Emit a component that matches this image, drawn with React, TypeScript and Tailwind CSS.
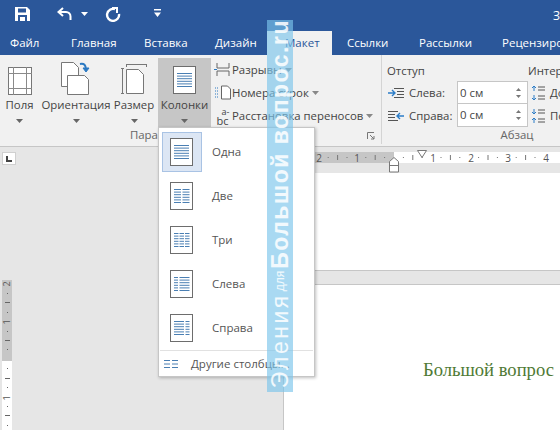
import { ReactNode } from "react"

const font = "font-['Open_Sans','Noto_Sans',sans-serif]"

function Caret({ className = "fill-[#666]" }: { className?: string }) {
  return (
    <svg width="7" height="4" viewBox="0 0 7 4" className={className}>
      <path d="M0 0h7L3.5 4z" />
    </svg>
  )
}

function PageIcon({ variant }: { variant: string }) {
  const rows = [0, 1, 2, 3, 4, 5]
  return (
    <svg width="24" height="29" viewBox="0 0 24 29" fill="none">
      <rect x="0.5" y="0.5" width="22" height="27" fill="#fff" stroke="#6d6d6d" />
      {rows.map((r) => {
        const y = 7.5 + r * 2.6
        if (variant === "one") return <path key={r} d={`M4 ${y}h15`} stroke="#4a7fb3" />
        if (variant === "two") return <path key={r} d={`M4 ${y}h7M12.5 ${y}h7`} stroke="#4a7fb3" />
        if (variant === "three") return <path key={r} d={`M4 ${y}h4.5M9.5 ${y}h4.5M15 ${y}h4.5`} stroke="#4a7fb3" />
        if (variant === "left") return <path key={r} d={`M4 ${y}h4M9.5 ${y}h10`} stroke="#4a7fb3" />
        return <path key={r} d={`M4 ${y}h10M15.5 ${y}h4`} stroke="#4a7fb3" />
      })}
    </svg>
  )
}

function TitleBar() {
  return (
    <div className="h-[31px] bg-[#2b579a] flex items-center text-white">
      <svg width="15" height="14" viewBox="0 0 15 14" className="ml-[15px] -mt-[3px]">
        <path d="M0 0h12l3 3v11H0z" fill="#fff" />
        <rect x="3" y="1.5" width="8" height="4" fill="#2b579a" />
        <rect x="3" y="8" width="9" height="6" fill="#2b579a" />
        <rect x="5" y="10" width="5" height="4" fill="#fff" />
      </svg>
      <svg width="16" height="14" viewBox="0 0 16 14" fill="none" stroke="#fff" strokeWidth="2" className="ml-[27px] -mt-[3px]">
        <path d="M6 1L1.5 5 6 9" />
        <path d="M2 5h7a4.5 4.5 0 0 1 4.5 4.5V13" />
      </svg>
      <Caret className="fill-white ml-[8px] -mt-[3px]" />
      <svg width="16" height="15" viewBox="0 0 16 15" fill="none" stroke="#fff" strokeWidth="2.4" className="ml-[17px] -mt-[3px]">
        <path d="M10 2.2a6 6 0 1 0 4 4.8" />
        <path d="M7 1h5v5" strokeWidth="2" />
      </svg>
      <svg width="7" height="8" viewBox="0 0 7 8" className="ml-[33px] -mt-[5px] fill-white">
        <path d="M0 0h7v1.4H0zM0 3.6h7L3.5 8z" />
      </svg>
      <span className={`ml-auto text-[12px] ${font}`}>З</span>
    </div>
  )
}

function Tabs() {
  const tabs = [
    { label: "Файл", w: "w-[46px] pl-[10px]" },
    { label: "Главная", w: "w-[73px] pl-[25px]" },
    { label: "Вставка", w: "w-[71px] pl-[25px]" },
    { label: "Дизайн", w: "w-[77px] pl-[25px]" },
  ]
  return (
    <div className={`h-[24px] bg-[#2b579a] flex text-[11.5px] text-white ${font}`}>
      {tabs.map((t) => (
        <div key={t.label} className={`${t.w} leading-[24px] shrink-0`}>{t.label}</div>
      ))}
      <div className="w-[65px] pl-[18px] leading-[24px] bg-[#f1f1f1] text-[#2b579a] shrink-0">Макет</div>
      <div className="w-[72px] pl-[15px] leading-[24px] shrink-0">Ссылки</div>
      <div className="w-[83px] pl-[15px] leading-[24px] shrink-0">Рассылки</div>
      <div className="pl-[15px] leading-[24px] whitespace-nowrap">Рецензирование</div>
    </div>
  )
}

function BigButton({ label, icon, className = "" }: { label: string; icon: ReactNode; className?: string }) {
  return (
    <div className={`h-[69px] flex flex-col items-center shrink-0 ${className}`}>
      <div className="h-[37px] flex items-end">{icon}</div>
      <div className="mt-[2px] leading-[16px] whitespace-nowrap">{label}</div>
      <div className="mt-[6px]"><Caret /></div>
    </div>
  )
}

function SmallRow({ icon, label }: { icon: ReactNode; label: string }) {
  return (
    <div className="h-[23px] flex items-center whitespace-nowrap">
      <div className="w-[19px] flex justify-center shrink-0">{icon}</div>
      <span>{label}</span>
      <Caret className="fill-[#888] ml-[3px]" />
    </div>
  )
}

function Spin({ value, className = "" }: { value: string; className?: string }) {
  return (
    <div className={`w-[71px] h-[23px] bg-white border border-[#c6c6c6] flex items-center pl-[2px] ${className}`}>
      <span>{value}</span>
      <div className="ml-auto mr-[6px] flex flex-col gap-[4px]">
        <svg width="5" height="3" viewBox="0 0 5 3" className="fill-[#777]"><path d="M2.5 0L5 3H0z" /></svg>
        <svg width="5" height="3" viewBox="0 0 5 3" className="fill-[#777]"><path d="M0 0h5L2.5 3z" /></svg>
      </div>
    </div>
  )
}

function IndentIcon({ flip }: { flip?: boolean }) {
  return (
    <svg width="18" height="12" viewBox="0 0 18 12" fill="none">
      {flip ? (
        <>
          <path d="M1 1.5h10M1 4.5h7M1 7.5h7M1 10.5h10" stroke="#555" />
          <path d="M17 6h-6M13 3l-3 3 3 3" stroke="#2b7cc7" strokeWidth="1.4" />
        </>
      ) : (
        <>
          <path d="M7 1.5h10M10 4.5h7M10 7.5h7M7 10.5h10" stroke="#555" />
          <path d="M1 6h6M5 3l3 3-3 3" stroke="#2b7cc7" strokeWidth="1.4" />
        </>
      )}
    </svg>
  )
}

function SpacingIcon({ flip }: { flip?: boolean }) {
  return (
    <svg width="14" height="16" viewBox="0 0 14 16" fill="none">
      <path d="M7 2h7M7 5h7M7 11h7M7 14h7" stroke="#555" />
      {flip ? (
        <path d="M3 1v5M1 4l2 2 2-2M3 15v-5M1 12l2-2 2 2" stroke="#2b7cc7" />
      ) : (
        <path d="M3 6V1M1 3l2-2 2 2M3 10v5M1 13l2 2 2-2" stroke="#2b7cc7" />
      )}
    </svg>
  )
}

function Ribbon() {
  return (
    <div className={`h-[92px] bg-[#f1f1f1] border-b border-[#c6c6c6] flex text-[11.4px] text-[#444] ${font}`}>
      <div className="w-[382px] shrink-0 border-r border-[#d4d4d4] mb-[2px] flex flex-col">
        <div className="flex pt-[3px]">
          <BigButton
            label="Поля"
            className="w-[39px]"
            icon={
              <svg width="24" height="28" viewBox="0 0 24 28" fill="none">
                <rect x="0.5" y="0.5" width="23" height="27" fill="#fff" stroke="#777" />
                <path d="M5.5 0v28M18.5 0v28M0 6.5h24M0 21.5h24" stroke="#8a8a8a" />
              </svg>
            }
          />
          <BigButton
            label="Ориентация"
            className="w-[74px]"
            icon={
              <svg width="30" height="33" viewBox="0 0 30 33" fill="none">
                <path d="M0.5 0.5h12l5 5v19H0.5z" fill="#fff" stroke="#777" />
                <path d="M6.5 13.5h17l4 4v15h-21z" fill="#fff" stroke="#777" />
                <path d="M19 2c4-1 6 1 6 6" stroke="#2b79c2" strokeWidth="2" />
                <path d="M22 6l3 4 3-4z" fill="#2b79c2" stroke="#2b79c2" />
              </svg>
            }
          />
          <BigButton
            label="Размер"
            className="w-[42px]"
            icon={
              <svg width="26" height="31" viewBox="0 0 26 31" fill="none">
                <path d="M5.5 5.5h12l5 5v19h-17z" fill="#fff" stroke="#777" />
                <path d="M5.5 0.5h20M5.5 0v3M25.5 0v3M0 4.5h3M0 29.5h3M1.5 4.5v25" stroke="#777" />
              </svg>
            }
          />
          <BigButton label="Колонки" className="w-[53px] ml-[3px] bg-[#c6c6c6]" icon={<PageIcon variant="one" />} />
          <div className="pl-[2px]">
            <SmallRow
              label="Разрывы"
              icon={
                <svg width="17" height="15" viewBox="0 0 17 15" fill="none" stroke="#666">
                  <path d="M3 1v5h12V1M3 14v-5h12v5" />
                  <path d="M0 7.5h3" stroke="#2b79c2" />
                </svg>
              }
            />
            <SmallRow
              label="Номера строк"
              icon={
                <svg width="17" height="15" viewBox="0 0 17 15" fill="none" stroke="#666">
                  <path d="M7.5 1h6l3 3v10h-9z" fill="#fff" />
                  <path d="M1 3h4M1 6h4M1 9h4M1 12h4" stroke="#2b79c2" strokeDasharray="1 1" />
                </svg>
              }
            />
            <SmallRow
              label="Расстановка переносов"
              icon={
                <span className="flex flex-col items-center text-[9px] leading-[9px] text-[#444]">
                  <span className="pl-[6px]">a-</span>
                  <span className="text-[11px]">bc</span>
                </span>
              }
            />
          </div>
        </div>
        <div className="relative mt-auto h-[17px] leading-[16px] text-center text-[#666]">
          Параметры страницы
          <svg width="8" height="8" viewBox="0 0 8 8" fill="none" stroke="#777" className="absolute right-[6px] top-[5px]">
            <path d="M0.5 7V0.5H7M3 3l4 4M7 4v3H4" />
          </svg>
        </div>
      </div>
      <div className="w-[270px] shrink-0 flex flex-col mb-[2px]">
        <div className="flex pt-[7px] pl-[5px]">
          <div className="w-[141px] shrink-0">
            <div className="h-[19px] leading-[18px]">Отступ</div>
            <div className="flex items-center">
              <div className="w-[22px]"><IndentIcon /></div>
              <span className="w-[48px]">Слева:</span>
              <Spin value="0 см" />
            </div>
            <div className="flex items-center">
              <div className="w-[22px]"><IndentIcon flip /></div>
              <span className="w-[48px]">Справа:</span>
              <Spin value="0 см" className="border-t-0" />
            </div>
          </div>
          <div className="whitespace-nowrap">
            <div className="h-[19px] leading-[18px]">Интервал</div>
            <div className="h-[23px] flex items-center gap-[5px] pl-[3px]"><SpacingIcon /><span>До:</span></div>
            <div className="h-[23px] flex items-center gap-[5px] pl-[3px]"><SpacingIcon flip /><span>После:</span></div>
          </div>
        </div>
        <div className="mt-auto h-[17px] leading-[16px] text-center text-[#666]">Абзац</div>
      </div>
    </div>
  )
}

function TopRuler() {
  const inches = [
    { n: "2", x: 35 },
    { n: "1", x: 73 },
    { n: "1", x: 149 },
    { n: "2", x: 187 },
    { n: "3", x: 224 },
    { n: "4", x: 262 },
  ]
  const start = 110
  const ticks: number[] = []
  for (let i = 0; i <= 24; i++) ticks.push(start + (i - 8) * 9.4)
  return (
    <div className="h-[26px] bg-[#e6e6e6] relative">
      <svg width="277" height="26" viewBox="0 0 277 26" className="block">
        <rect x="0" y="5" width="277" height="11" fill="#fff" />
        <rect x="0" y="5" width={start} height="11" fill="#c6c6c6" />
        {ticks.map((x, i) =>
          i % 4 === 0 ? null : i % 4 === 2 ? (
            <path key={i} d={`M${x} 8v5`} stroke="#777" />
          ) : (
            <path key={i} d={`M${x} 10v1`} stroke="#777" />
          )
        )}
        {inches.map((t, i) => (
          <text key={i} x={t.x} y="14.5" textAnchor="middle" fontSize="10" fill="#555" fontFamily="Open Sans, sans-serif">
            {t.n}
          </text>
        ))}
        <path d="M133.5 3.5h9l-4.5 7z" fill="#fff" stroke="#777" />
        <path d="M105.5 17v-2.5l4.5-4 4.5 4V25h-9z" fill="#fff" stroke="#777" />
        <path d="M105.5 18.5h9" stroke="#777" />
      </svg>
    </div>
  )
}

function LeftRuler() {
  const ticks = [0, 1, 2, 4, 5, 6, 8, 9, 10, 12, 13, 14]
  const labels = [
    { n: "2", y: 4 },
    { n: "1", y: 42 },
    { n: "1", y: 118 },
  ]
  return (
    <svg width="10" height="150" viewBox="0 0 10 150" className="ml-[2px] mt-[115px] block">
      <rect width="10" height="81" fill="#c6c6c6" />
      <rect y="81" width="10" height="69" fill="#fff" />
      {ticks.map((i) => {
        const y = Math.round(13 + i * 9.4) + 0.5
        return <path key={i} d={i % 2 === 1 ? `M3 ${y}h5` : `M5 ${y}h1`} stroke="#666" />
      })}
      {labels.map((l, i) => (
        <text key={i} x="5" y={l.y + 3} textAnchor="middle" fontSize="9" fill="#555" fontFamily="Open Sans, sans-serif" transform={`rotate(-90 5 ${l.y})`}>
          {l.n}
        </text>
      ))}
    </svg>
  )
}

function Document() {
  return (
    <div className="flex h-[283px] bg-[#e6e6e6]">
      <div className="w-[283px] shrink-0">
        <div className="ml-[2px] mt-[5px] w-[14px] h-[13px] bg-white border border-[#d0d0d0] flex items-center justify-center">
          <div className="w-[6px] h-[6px] border-l-2 border-b-2 border-[#444]" />
        </div>
        <LeftRuler />
      </div>
      <div className="flex-1 flex flex-col border-l border-[#c6c6c6]">
        <TopRuler />
        <div className="h-[97px] bg-white" />
        <div className="h-[15px] bg-[#e6e6e6] border-y border-[#c6c6c6]" />
        <div className="flex-1 bg-white pt-[75px] pl-[139px]">
          <div className="font-['Liberation_Serif',serif] text-[18.6px] leading-[20px] text-[#4f7a35] whitespace-nowrap">Большой вопрос</div>
        </div>
      </div>
    </div>
  )
}

function MenuItem({ variant, label, selected }: { variant: string; label: string; selected?: boolean }) {
  return (
    <div className="h-[44px] flex items-center">
      <div className={`w-[40px] h-[40px] ml-[3px] flex items-center justify-center border ${selected ? "bg-[#dce6f4] border-[#a9c3e4]" : "border-transparent"}`}>
        <PageIcon variant={variant} />
      </div>
      <span className="ml-[10px]">{label}</span>
    </div>
  )
}

function ColumnsMenu() {
  return (
    <div className={`absolute left-[158px] top-[127px] w-[157px] h-[250px] bg-white border border-[#c6c6c6] shadow-[1px_1px_3px_rgba(0,0,0,0.25)] text-[11.5px] text-[#555] ${font}`}>
      <div className="pt-[2px]">
        <MenuItem variant="one" label="Одна" selected />
        <MenuItem variant="two" label="Две" />
        <MenuItem variant="three" label="Три" />
        <MenuItem variant="left" label="Слева" />
        <MenuItem variant="right" label="Справа" />
      </div>
      <div className="mx-[1px] border-t border-[#e1e1e1]" />
      <div className="h-[26px] flex items-center pl-[5px]">
        <svg width="14" height="10" viewBox="0 0 14 10" fill="none" stroke="#4a7fb3">
          <path d="M0 1.5h6M8 1.5h6M0 5h6M8 5h6M0 8.5h6M8 8.5h6" />
        </svg>
        <span className="ml-[13px]">Другие столбцы...</span>
      </div>
    </div>
  )
}

function Watermark() {
  return (
    <div className="absolute left-[267px] top-[20px] w-[26px] h-[372px] bg-[#7bc5eb]/65 overflow-hidden flex items-end justify-center pb-[4px]">
      <div className="[writing-mode:vertical-rl] rotate-180 whitespace-nowrap font-['Liberation_Sans',sans-serif] font-bold text-white/85 text-[23px] leading-[26px] tracking-[1.5px]">
        <span className="tracking-[2.5px] font-normal">Эления</span>
        <span className="text-[12px] font-normal tracking-[0px] mx-[2px]">для</span>
        Большой вопрос.ru
      </div>
    </div>
  )
}

export default function App() {
  return (
    <div className="relative w-[560px] h-[430px] overflow-hidden bg-[#e6e6e6]">
      <TitleBar />
      <Tabs />
      <Ribbon />
      <Document />
      <ColumnsMenu />
      <Watermark />
    </div>
  )
}
